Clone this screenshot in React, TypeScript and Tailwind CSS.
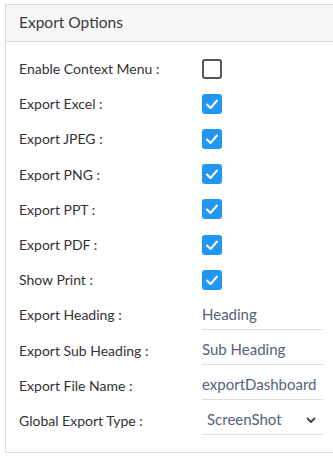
import React from 'react';

const checks = [
  { label: 'Enable Context Menu :', checked: false },
  { label: 'Export Excel :', checked: true },
  { label: 'Export JPEG :', checked: true },
  { label: 'Export PNG :', checked: true },
  { label: 'Export PPT :', checked: true },
  { label: 'Export PDF :', checked: true },
  { label: 'Show Print :', checked: true },
];

const inputs = [
  { label: 'Export Heading :', value: 'Heading' },
  { label: 'Export Sub Heading :', value: 'Sub Heading' },
  { label: 'Export File Name :', value: 'exportDashboard' },
];

function Checkbox({ checked }: { checked: boolean }) {
  if (!checked) {
    return <div className="w-5 h-5 rounded-[3px] border-2 border-[#555]" />;
  }
  return (
    <div className="w-5 h-5 rounded-[3px] bg-[#2196f3] flex items-center justify-center">
      <svg width="14" height="14" viewBox="0 0 14 14" fill="none">
        <path d="M2 7.5 L5.5 11 L12 3.5" stroke="white" strokeWidth="2" strokeLinecap="round" strokeLinejoin="round" />
      </svg>
    </div>
  );
}

export default function App() {
  return (
    <div
      className="w-[333px] h-[457px] bg-white pt-1 pl-[5px] overflow-hidden"
      style={{ fontFamily: 'Lato, "Noto Sans", sans-serif' }}
    >
      <div className="border-l border-t border-b border-[#dcdcdc] h-[449px]">
        {/* Header */}
        <div className="h-[37px] bg-[#f7f7f7] border-b border-[#dcdcdc] flex items-center pl-[13px] text-[15.5px] text-[#3a3a3a]">
          Export Options
        </div>

        {/* Body */}
        <div className="pt-[9px] pl-[13px] text-[14px] text-[#333]">
          {checks.map((c) => (
            <div key={c.label} className="h-[35.2px] flex items-center">
              <div className="w-[183px]">{c.label}</div>
              <Checkbox checked={c.checked} />
            </div>
          ))}

          {inputs.map((i) => (
            <div key={i.label} className="h-[35.2px] flex items-center">
              <div className="w-[183px]">{i.label}</div>
              <div className="self-end mb-[3px] h-[30px] w-[121px] border-b border-[#dcdcdc] flex items-center text-[15px] text-[#56627a] whitespace-nowrap">
                {i.value}
              </div>
            </div>
          ))}

          <div className="h-[35.2px] flex items-center">
            <div className="w-[183px]">Global Export Type :</div>
            <div className="self-end mb-[3px] h-[30px] w-[121px] border-b border-[#dcdcdc] flex items-center justify-between pl-[5px] pr-[6px] text-[15px] text-[#56627a]">
              <span>ScreenShot</span>
              <svg width="12" height="12" viewBox="0 0 12 12" fill="none">
                <path d="M2.5 4.5 L6 8 L9.5 4.5" stroke="#444" strokeWidth="1.8" strokeLinecap="round" strokeLinejoin="round" />
              </svg>
            </div>
          </div>
        </div>
      </div>
    </div>
  );
}
